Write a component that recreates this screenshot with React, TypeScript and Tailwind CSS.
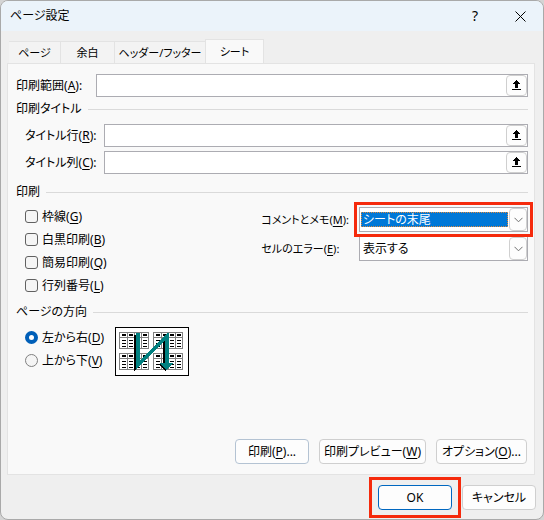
import { useState } from "react";
import type { ReactNode } from "react";

const tabs = ["ページ", "余白", "ヘッダー/フッター", "シート"];
const tabWidths = ["w-[52px]", "w-[54px]", "w-[90px]", "w-[59px]"];

function Label({ text, k, colon }: { text: string; k: string; colon?: boolean }) {
  return (
    <>
      {text}(<span className="underline underline-offset-2">{k}</span>){colon && ":"}
    </>
  );
}

function SectionTitle({ children }: { children: ReactNode }) {
  return (
    <div className="flex h-4 items-center gap-1.5">
      <h2>{children}</h2>
      <div className="h-px flex-1 bg-[#dadada]" />
    </div>
  );
}

function RangeField({ id, text, k, labelClass }: { id: string; text: string; k: string; labelClass: string }) {
  return (
    <div className="flex items-center">
      <label htmlFor={id} className={labelClass}>
        <Label text={text} k={k} colon />
      </label>
      <div className="flex h-[23px] min-w-0 flex-1 border border-[#acacb2] bg-white">
        <input id={id} type="text" className="min-w-0 flex-1 px-1 outline-none" />
        <button
          type="button"
          aria-label="範囲を選択"
          className="flex w-[21px] items-center justify-center rounded border border-[#cfcfcf] bg-[#fdfdfd]"
        >
          <svg width="9" height="11" viewBox="0 0 9 11" shapeRendering="crispEdges">
            <path
              d="M4 0h1v1h1v1h1v1h1v1H6v4H3V4H1V3h1V2h1V1h1zM0 9h9v1H0z"
              fill="#000"
            />
          </svg>
        </button>
      </div>
    </div>
  );
}

function CheckRow({ text, k }: { text: string; k: string }) {
  return (
    <label className="flex h-[23px] items-center gap-1">
      <input
        type="checkbox"
        className="size-[13px] appearance-none rounded-[3px] border border-[#616161] bg-[#f5f5f5] checked:bg-[#005fb8]"
      />
      <span>
        <Label text={text} k={k} />
      </span>
    </label>
  );
}

function RadioRow({ text, k, checked, onChange }: { text: string; k: string; checked: boolean; onChange: () => void }) {
  return (
    <label className="flex h-[23px] items-center gap-1">
      <input
        type="radio"
        name="direction"
        checked={checked}
        onChange={onChange}
        className="size-[13px] appearance-none rounded-full border border-[#808080] bg-[#f5f5f5] checked:border-4 checked:border-[#005fb8] checked:bg-white"
      />
      <span>
        <Label text={text} k={k} />
      </span>
    </label>
  );
}

function ComboBox({ id, value, focused }: { id: string; value: string; focused?: boolean }) {
  return (
    <div className="flex h-[25px] w-[169px] border border-[#acacb2] bg-white">
      <select
        id={id}
        className={
          focused
            ? "my-1 ml-px min-w-0 flex-1 appearance-none bg-[#0078d7] pl-0.5 leading-[15px] text-white outline-1 -outline-offset-1 outline-dotted outline-[#e08a3c]"
            : "my-1 ml-px min-w-0 flex-1 appearance-none pl-0.5 leading-[15px] outline-none"
        }
      >
        <option>{value}</option>
      </select>
      <span className="ml-px flex w-[18px] items-center justify-center rounded-sm border border-[#d0d0d0] bg-[#fdfdfd]">
        <svg width="9" height="6" viewBox="0 0 9 6" fill="none" stroke="#707070">
          <path d="M.5.8l4 4 4-4" />
        </svg>
      </span>
    </div>
  );
}

function DialogButton({ children, className }: { children: ReactNode; className: string }) {
  return (
    <button type="button" className={`h-[25px] rounded border bg-[#fdfdfd] whitespace-nowrap ${className}`}>
      {children}
    </button>
  );
}

function MiniPage({ x, y }: { x: number; y: number }) {
  return (
    <g transform={`translate(${x} ${y})`}>
      <path d="M0 0h30v17H0zM1 1v15h28V1z" fill="#808080" fillRule="evenodd" />
      <path d="M1 5h28v1H1zM8 1h1v15H8zM15 1h1v15h-1zM22 1h1v15h-1z" fill="#808080" />
      <path d="M3 2h4v2H3zM10 2h4v2h-4zM17 2h4v2h-4zM24 2h4v2h-4z" fill="#000" />
      {[8, 11, 14].map((row) => (
        <path key={row} d={`M3 ${row}h4v1H3zM10 ${row}h4v1h-4zM17 ${row}h4v1h-4zM24 ${row}h4v1h-4z`} fill="#000" />
      ))}
    </g>
  );
}

function DirectionPreview() {
  return (
    <svg className="mt-px" width="74" height="49" viewBox="0 0 74 49" shapeRendering="crispEdges">
      <rect width="74" height="49" fill="#000" />
      <rect x="1" y="1" width="72" height="47" fill="#fff" />
      <MiniPage x={4} y={5} />
      <MiniPage x={38} y={5} />
      <MiniPage x={4} y={26} />
      <MiniPage x={38} y={26} />
      <path d="M19 8h3v33l-2 3h-1zM48 14h3v22h-3zM44 37h4l4 5-2 2z" fill="#000" />
      <path d="M21 6h4v27L52 6h2v30h4l-6 7h-1l-6-7h5V13L22 42h-1z" fill="#008080" />
    </svg>
  );
}

export default function App() {
  const [activeTab, setActiveTab] = useState("シート");
  const [direction, setDirection] = useState("D");

  return (
    <div className="min-h-screen bg-[#d4d4d4] font-['Noto_Sans','Noto_Sans_CJK_JP',sans-serif] text-xs leading-4 text-black [font-feature-settings:'palt']">
      <main className="flex min-h-screen flex-col overflow-hidden rounded-lg border border-[#a9a9a9] bg-[#efefef]">
        <header className="flex h-[30px] items-center bg-[#ebf3fa] pr-[17px] pl-[9px]">
          <h1 className="flex-1">ページ設定</h1>
          <button type="button" aria-label="ヘルプ" className="mr-[34px] w-3 text-sm">
            ?
          </button>
          <button type="button" aria-label="閉じる">
            <svg width="11" height="11" viewBox="0 0 11 11" stroke="#000" fill="none">
              <path d="M.5.5l10 10M10.5.5l-10 10" />
            </svg>
          </button>
        </header>

        <div className="flex flex-1 flex-col px-1.5 pt-2">
          <div role="tablist" className="flex items-end pl-0.5">
            {tabs.map((tab, i) => (
              <button
                key={tab}
                type="button"
                role="tab"
                aria-selected={tab === activeTab}
                onClick={() => setActiveTab(tab)}
                className={`${tabWidths[i]} whitespace-nowrap border-[#e3e3e3] text-[11px] ${
                  tab === activeTab
                    ? "-mb-px h-[25px] border-x border-t bg-[#f9f9f9]"
                    : "h-[22px] border-t border-r bg-[#f3f3f3] last:border-r-0 [&:nth-child(3)]:border-r-0"
                }`}
              >
                {tab}
              </button>
            ))}
          </div>

          <section className="mr-0.5 flex flex-1 flex-col border border-[#e3e3e3] bg-[#f9f9f9] pt-2.5 pr-1.5 pb-2.5 pl-2">
            <RangeField id="area" text="印刷範囲" k="A" labelClass="w-20" />

            <div className="mt-1">
              <SectionTitle>印刷タイトル</SectionTitle>
            </div>
            <div className="mt-[7px] flex flex-col gap-1 pl-[9px]">
              <RangeField id="rows" text="タイトル行" k="R" labelClass="w-[79px]" />
              <RangeField id="cols" text="タイトル列" k="C" labelClass="w-[79px]" />
            </div>

            <div className="mt-2.5">
              <SectionTitle>印刷</SectionTitle>
            </div>
            <div className="mt-[5px] flex items-start justify-between pl-[9px]">
              <div>
                <CheckRow text="枠線" k="G" />
                <CheckRow text="白黒印刷" k="B" />
                <CheckRow text="簡易印刷" k="Q" />
                <CheckRow text="行列番号" k="L" />
              </div>
              <div className="mt-0.5 grid grid-cols-[auto_auto] items-center gap-x-2.5 gap-y-1">
                <label htmlFor="comments" className="text-[11px]">
                  <Label text="コメントとメモ" k="M" colon />
                </label>
                <div className="relative">
                  <ComboBox id="comments" value="シートの末尾" focused />
                  <div className="pointer-events-none absolute -inset-x-[5px] -inset-y-[5px] border-3 border-[#f52a0c]" />
                </div>
                <label htmlFor="errors" className="text-[11px]">
                  <Label text="セルのエラー" k="E" colon />
                </label>
                <ComboBox id="errors" value="表示する" />
              </div>
            </div>

            <div className="mt-[7px]">
              <SectionTitle>ページの方向</SectionTitle>
            </div>
            <div className="mt-1.5 flex items-start gap-[11px] pl-[9px]">
              <div>
                <RadioRow text="左から右" k="D" checked={direction === "D"} onChange={() => setDirection("D")} />
                <RadioRow text="上から下" k="V" checked={direction === "V"} onChange={() => setDirection("V")} />
              </div>
              <DirectionPreview />
            </div>

            <div className="mt-auto flex justify-end gap-2.5 pr-px">
              <DialogButton className="w-[74px] border-[#b4c3d3]">
                <Label text="印刷" k="P" />
                ...
              </DialogButton>
              <DialogButton className="w-[107px] border-[#cfcfcf]">
                <Label text="印刷プレビュー" k="W" />
              </DialogButton>
              <DialogButton className="w-[91px] border-[#cfcfcf]">
                <Label text="オプション" k="O" />
                ...
              </DialogButton>
            </div>
          </section>

          <footer className="flex justify-end gap-2.5 pt-2.5 pr-px pb-[9px]">
            <div className="relative">
              <DialogButton className="w-[74px] border-[#0067c0]">OK</DialogButton>
              <div className="pointer-events-none absolute -inset-x-[9px] -inset-y-2 border-3 border-[#f52a0c]" />
            </div>
            <DialogButton className="w-[74px] border-[#cfcfcf]">キャンセル</DialogButton>
          </footer>
        </div>
      </main>
    </div>
  );
}
